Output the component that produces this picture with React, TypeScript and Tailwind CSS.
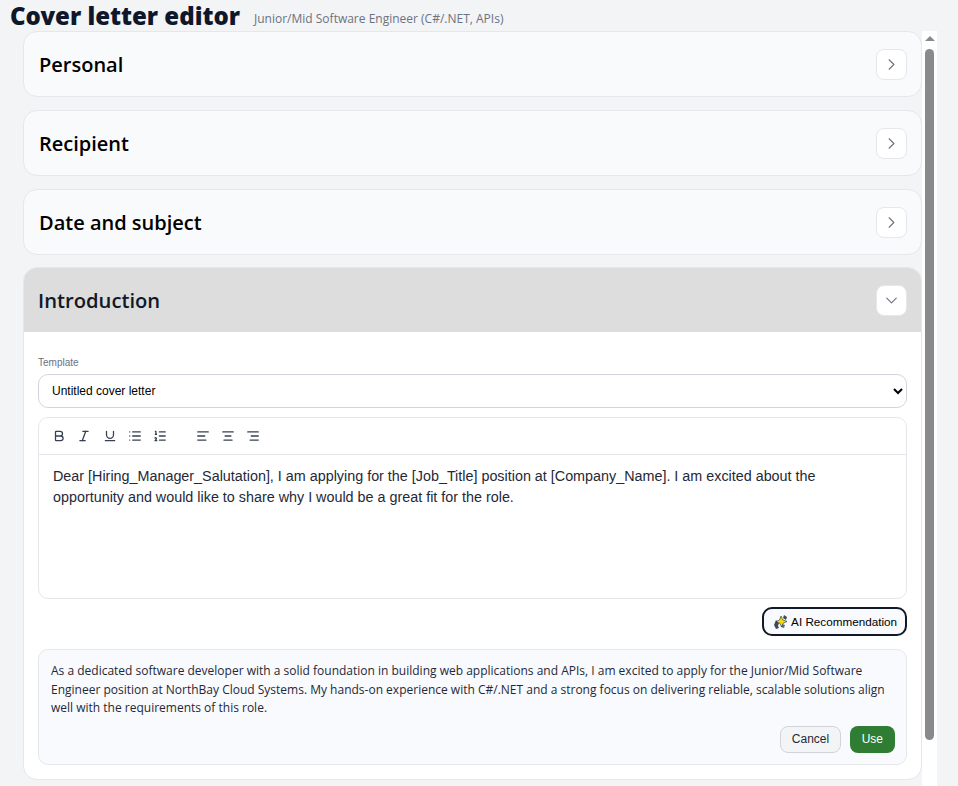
import { ChevronDown, ChevronRight, Bold, Italic, Underline, List, ListOrdered, AlignLeft, AlignCenter, AlignRight } from "lucide-react";

const ui = "font-['Open_Sans',sans-serif]";
const arial = "font-['Liberation_Sans',Arial,sans-serif]";

function Collapsed({ title }: { title: string }) {
  return (
    <div className="flex h-[66px] items-center justify-between rounded-[14px] border border-[#e5e7eb] bg-[#f9fafb] pl-[15px] pr-[14px]">
      <h2 className={`${ui} pt-[2px] text-[20px] font-semibold text-black`}>{title}</h2>
      <button className="flex h-[31px] w-[31px] items-center justify-center rounded-lg border border-[#e5e7eb] bg-white text-[#6b7280]">
        <ChevronRight size={19} strokeWidth={1.4} />
      </button>
    </div>
  );
}

const toolbar = [
  { Icon: Bold, x: "w-[25px]" },
  { Icon: Italic, x: "w-[26px]" },
  { Icon: Underline, x: "w-[25px]" },
  { Icon: List, x: "w-[25px]" },
  { Icon: ListOrdered, x: "w-[43px]" },
  { Icon: AlignLeft, x: "w-[25px]" },
  { Icon: AlignCenter, x: "w-[25px]" },
  { Icon: AlignRight, x: "w-[25px]" },
];

export default function App() {
  return (
    <div className="flex h-[786px] w-[958px] flex-col overflow-hidden bg-[#f3f4f6]">
      <div className="flex h-[31px] shrink-0 items-center pl-[10px]">
        <h1 className="font-['Noto_Sans',sans-serif] text-[24px] font-black leading-[31px] text-[#0f172a]">Cover letter editor</h1>
        <span className={`${ui} ml-[14px] mt-[6px] text-[12px] text-[#6b7280]`}>Junior/Mid Software Engineer (C#/.NET, APIs)</span>
      </div>

      <div className="flex min-h-0 flex-1">
        <div className="ml-[23px] flex w-[899px] shrink-0 flex-col gap-[13px]">
          <Collapsed title="Personal" />
          <Collapsed title="Recipient" />
          <Collapsed title="Date and subject" />

          <div className="-mt-[1px] overflow-hidden rounded-[14px] border border-[#e5e7eb] bg-white">
            <div className="flex h-[64px] items-center justify-between bg-[#dddddd] pl-[14px] pr-[14px]">
              <h2 className={`${ui} pt-[1px] text-[20.2px] font-semibold text-[#111827]`}>Introduction</h2>
              <button className="flex h-[31px] w-[31px] items-center justify-center rounded-lg border border-[#e5e7eb] bg-white text-[#6b7280]">
                <ChevronDown size={19} strokeWidth={1.4} />
              </button>
            </div>

            <div className="px-[14px] pb-[14px] pt-[25px]">
              <label className={`${arial} block text-[10px] leading-[12px] text-[#6b7280]`}>Template</label>
              <select defaultValue="u" className={`${arial} mt-[5px] block h-[34px] w-full rounded-[10px] border border-[#d1d5db] bg-white pl-[9px] text-[12px] text-black`}>
                <option value="u">Untitled cover letter</option>
              </select>

              <div className="mt-[9px] rounded-[10px] border border-[#e5e7eb]">
                <div className="flex h-[37px] items-center border-b border-[#e5e7eb] pl-[13px] text-[#374151]">
                  {toolbar.map(({ Icon, x }, i) => (
                    <span key={i} className={`${x} flex items-center`}>
                      <Icon size={14} strokeWidth={2.2} />
                    </span>
                  ))}
                </div>
                <div className={`${arial} h-[143px] pb-[11px] pl-[14px] pr-[40px] pt-[11px] text-[14.35px] leading-[21px] text-[#1f2937]`}>
                  Dear [Hiring_Manager_Salutation], I am applying for the [Job_Title] position at [Company_Name]. I am excited about the opportunity and would like to share why I would be a great fit for the role.
                </div>
              </div>

              <div className="mt-[8px] flex justify-end">
                <button className={`${arial} flex h-[29px] items-center gap-[2px] rounded-[10px] border-2 border-[#111827] bg-[#f8fafd] pl-[9px] pr-[8px] text-[11.7px] text-black`}>
                  <svg width="16" height="16" viewBox="0 0 16 16">
                    <path d="M3 6l3 3-1 3 1 2-3 1-2-4z" fill="#3f4a5a" />
                    <path d="M11 1l3 2-1 3-3-2z" fill="#3f4a5a" />
                    <path d="M9 10l3 1-1 3-3-1z" fill="#4b6a9b" />
                    <path d="M8 2l1.7 3.8L14 7.5l-3.8 1.7L8.5 13 6.8 9.2 3 7.8l3.6-2z" fill="#f5d90a" stroke="#1f2937" strokeWidth="0.6" />
                  </svg>
                  AI Recommendation
                </button>
              </div>

              <div className="mt-[13px] rounded-[10px] border border-[#e5e7eb] bg-[#f8fafd] pb-[11px] pl-[12px] pr-[11px] pt-[12px]">
                <p className={`${ui} text-[12px] leading-[18.5px] text-[#1f2937]`}>
                  As a dedicated software developer with a solid foundation in building web applications and APIs, I am excited to apply for the Junior/Mid Software Engineer position at NorthBay Cloud Systems. My hands-on experience with C#/.NET and a strong focus on delivering reliable, scalable solutions align well with the requirements of this role.
                </p>
                <div className="mt-[8px] flex justify-end gap-[9px]">
                  <button className={`${arial} h-[27px] rounded-lg border border-[#d1d5db] bg-[#f3f4f6] px-[10.5px] text-[12px] text-[#1f2937]`}>Cancel</button>
                  <button className={`${arial} h-[27px] rounded-lg bg-[#2e7d32] px-[12px] text-[12px] text-white`}>Use</button>
                </div>
              </div>
            </div>
          </div>
        </div>

        <div className="flex w-[15px] shrink-0 flex-col items-center bg-white pt-[5px]">
          <div className="h-0 w-0 border-x-[5px] border-b-[5px] border-x-transparent border-b-[#8a8a8a]" />
          <div className="mt-[8px] h-[691px] w-[9px] rounded-full bg-[#8a8a8a]" />
        </div>
      </div>
    </div>
  );
}
